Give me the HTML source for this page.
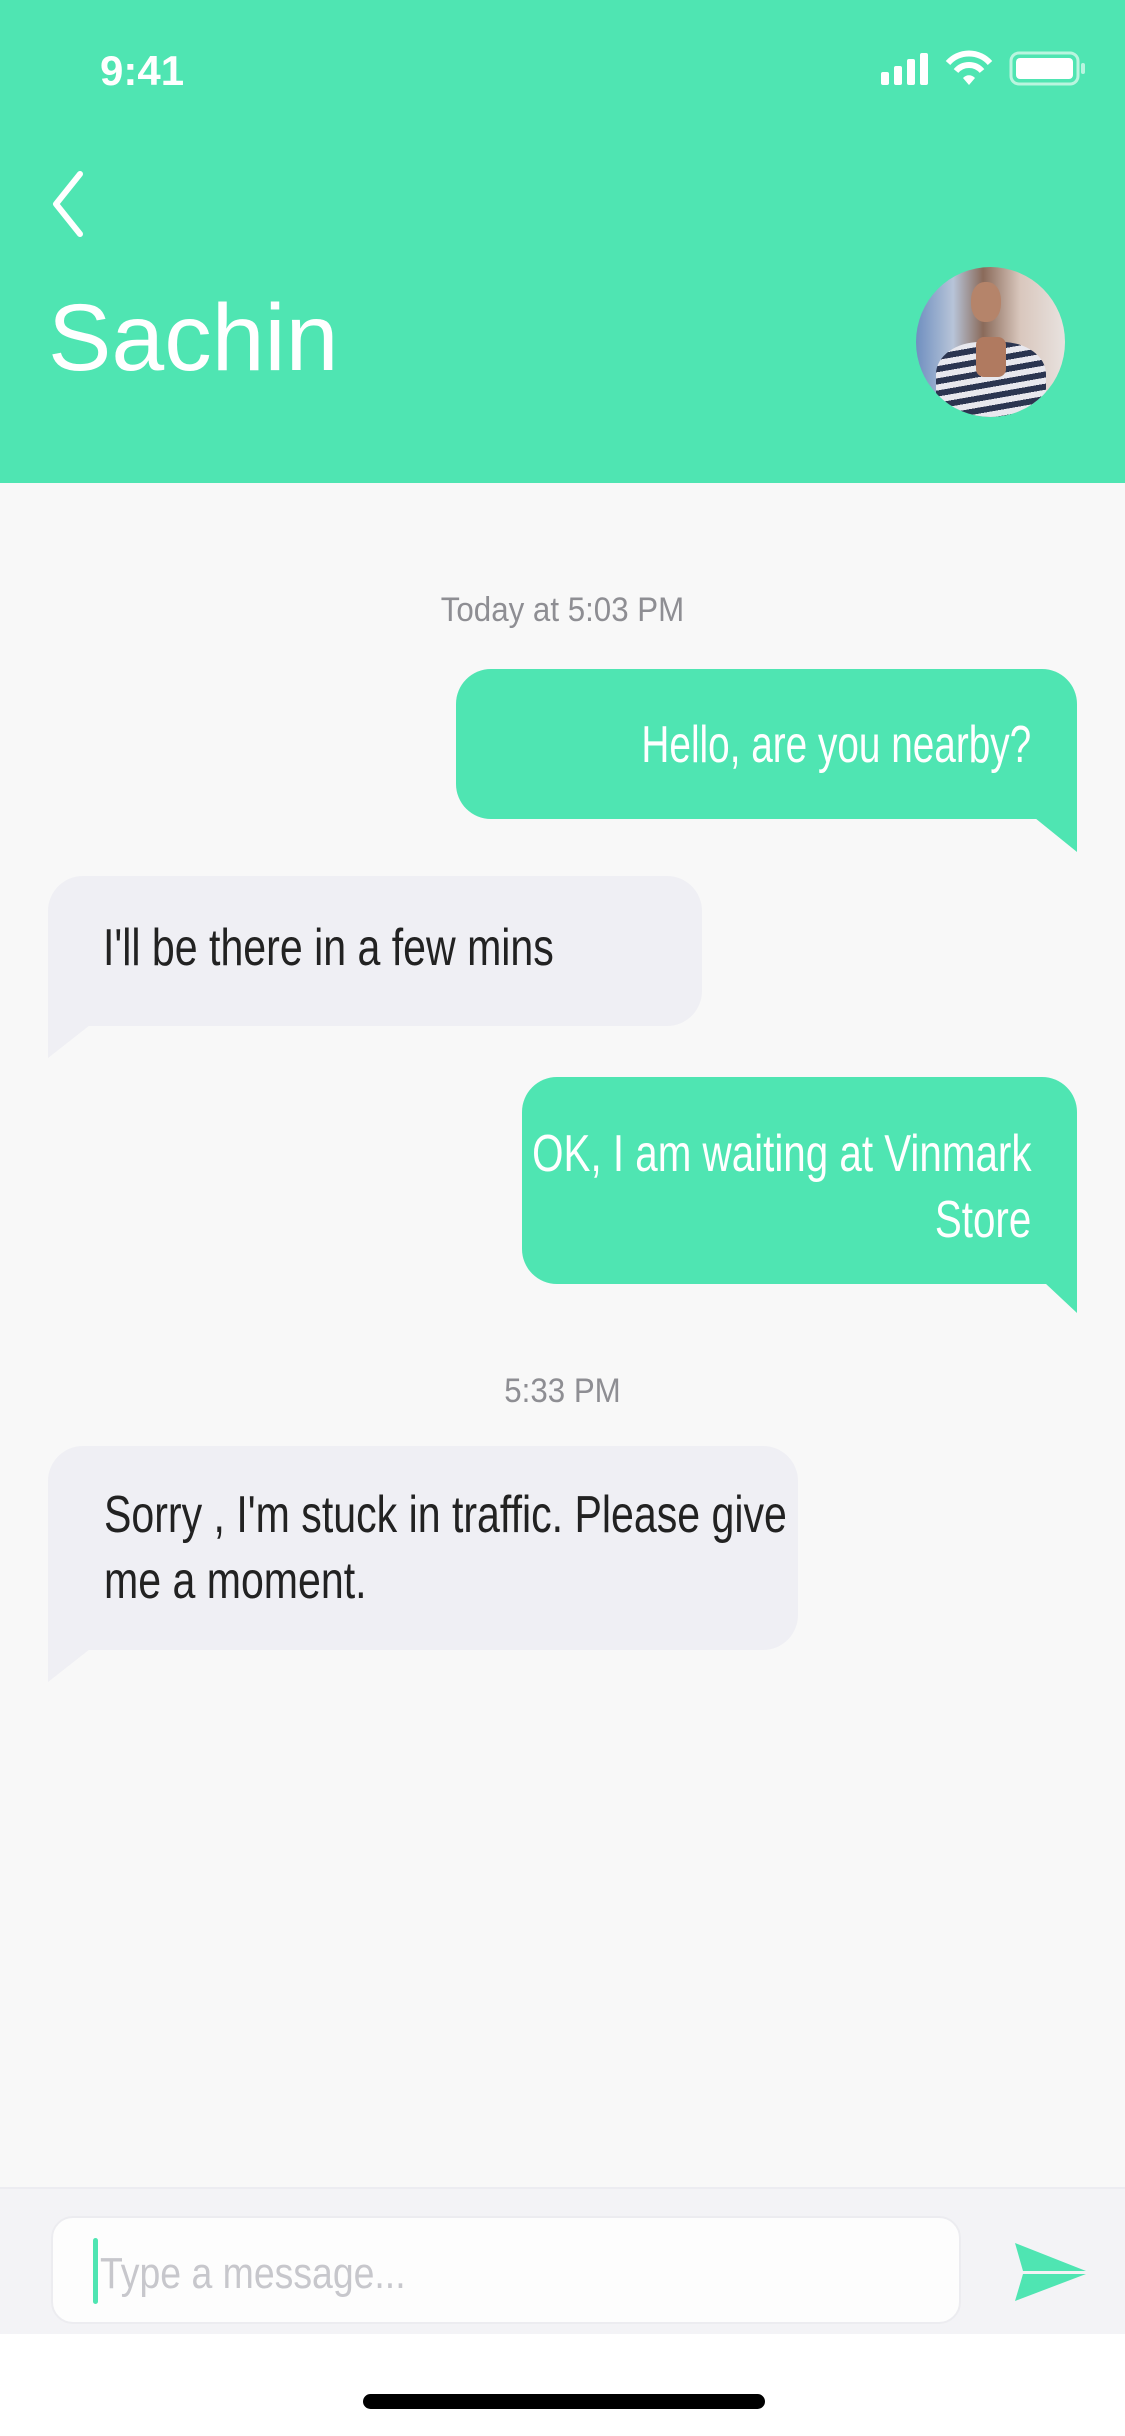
<!DOCTYPE html>
<html><head><meta charset="utf-8"><style>
*{margin:0;padding:0;box-sizing:border-box}
body{width:1125px;height:2436px;position:relative;background:#f8f8f8;overflow:hidden;font-family:"Liberation Sans",sans-serif}
.abs{position:absolute}
.t{position:absolute;white-space:nowrap;font-family:"Liberation Sans Narrow","Liberation Sans",sans-serif;font-size:52px;line-height:66px}
.l{transform-origin:left top}
.r{transform-origin:right top;text-align:right}
.ts{position:absolute;left:0;width:1125px;text-align:center;font-family:"Liberation Sans Narrow","Liberation Sans",sans-serif;font-size:34px;color:#8e8e93;line-height:40px;transform:scaleX(0.92)}
.g{background:#4fe5b2}
.gr{background:#efeff4}
</style></head><body>
<div class="abs g" style="left:0;top:0;width:1125px;height:483px"></div>
<div class="abs" style="left:100px;top:48px;font-size:42px;color:#fff;font-weight:bold;line-height:46px;font-family:'Liberation Sans Narrow','Liberation Sans',sans-serif">9:41</div>
<svg class="abs" style="left:878px;top:50px" width="210" height="40" viewBox="0 0 210 40">
<rect x="3" y="22" width="8" height="13" rx="2" fill="#fff"/><rect x="16" y="16" width="8" height="19" rx="2" fill="#fff"/><rect x="29" y="9" width="8" height="26" rx="2" fill="#fff"/><rect x="42" y="3" width="8" height="32" rx="2" fill="#fff"/>
<path d="M70 13 A28 28 0 0 1 112 13" stroke="#fff" stroke-width="6" fill="none"/><path d="M78 21 A17 17 0 0 1 104 21" stroke="#fff" stroke-width="6" fill="none"/><path d="M85 28 L91 35 L97 28 A8 8 0 0 0 85 28Z" fill="#fff"/>
<rect x="133" y="3" width="67" height="31" rx="8" stroke="#b9f5df" stroke-width="3" fill="none"/><rect x="138" y="8" width="57" height="21" rx="4" fill="#fff"/><rect x="203" y="13" width="4" height="11" rx="2" fill="#b9f5df"/>
</svg>
<svg class="abs" style="left:44px;top:168px" width="50" height="70"><path d="M36 6 L12 36 L36 66" stroke="#fff" stroke-width="6" fill="none" stroke-linecap="round" stroke-linejoin="round"/></svg>
<div class="abs" style="left:48px;top:283px;font-size:95px;color:#fff;line-height:110px">Sachin</div>
<div class="abs" style="left:916px;top:267px;width:149px;height:150px;border-radius:50%;overflow:hidden;background:linear-gradient(90deg,#6f8fc0 0%,#b7c4d8 25%,#8a6a5a 45%,#d9c7bd 70%,#e8e2df 100%)">
<div class="abs" style="left:55px;top:15px;width:30px;height:40px;border-radius:45%;background:#b5846a"></div>
<div class="abs" style="left:20px;top:75px;width:110px;height:80px;border-radius:40% 40% 0 0;background:repeating-linear-gradient(170deg,#2b3550 0 6px,#e8e8ee 6px 12px)"></div>
<div class="abs" style="left:60px;top:70px;width:30px;height:40px;background:#b07a60;border-radius:8px"></div>
</div>

<div class="ts" style="top:590px">Today at 5:03 PM</div>
<div class="abs g" style="left:456px;top:669px;width:621px;height:150px;border-radius:35px 35px 0 35px"></div>
<svg class="abs" style="left:1035px;top:818px" width="42" height="35"><path d="M0 0 L42 0 L42 34Z" fill="#4fe5b2"/></svg>
<div class="t r" style="right:94px;top:712px;color:#fff;transform:scaleX(0.745)">Hello, are you nearby?</div>

<div class="abs gr" style="left:48px;top:876px;width:654px;height:150px;border-radius:35px 35px 35px 0"></div>
<svg class="abs" style="left:48px;top:1025px" width="42" height="34"><path d="M0 0 L42 0 L0 33Z" fill="#efeff4"/></svg>
<div class="t l" style="left:103px;top:915px;color:#222;transform:scaleX(0.79)">I'll be there in a few mins</div>

<div class="abs g" style="left:522px;top:1077px;width:555px;height:207px;border-radius:35px 35px 0 35px"></div>
<svg class="abs" style="left:1045px;top:1283px" width="32" height="31"><path d="M0 0 L32 0 L32 30Z" fill="#4fe5b2"/></svg>
<div class="t r" style="right:94px;top:1121px;color:#fff;transform:scaleX(0.776)">OK, I am waiting at Vinmark</div>
<div class="t r" style="right:94px;top:1187px;color:#fff;transform:scaleX(0.776)">Store</div>

<div class="ts" style="top:1371px">5:33 PM</div>
<div class="abs gr" style="left:48px;top:1446px;width:750px;height:204px;border-radius:35px 35px 35px 0"></div>
<svg class="abs" style="left:48px;top:1649px" width="42" height="34"><path d="M0 0 L42 0 L0 33Z" fill="#efeff4"/></svg>
<div class="t l" style="left:104px;top:1482px;color:#222;transform:scaleX(0.79)">Sorry , I'm stuck in traffic. Please give</div>
<div class="t l" style="left:104px;top:1548px;color:#222;transform:scaleX(0.79)">me a moment.</div>

<div class="abs" style="left:0;top:2187px;width:1125px;height:147px;background:#f3f3f6;border-top:2px solid #ececf1"></div>
<div class="abs" style="left:51px;top:2216px;width:910px;height:108px;border-radius:22px;background:#fdfdfd;border:2px solid #ececf0"></div>
<div class="abs" style="left:93px;top:2238px;width:5px;height:66px;border-radius:3px;background:#4fe5b2"></div>
<div class="abs" style="left:100px;top:2249px;font-size:44px;line-height:50px;color:#c7c7cc;font-family:'Liberation Sans Narrow','Liberation Sans',sans-serif;transform:scaleX(0.85);transform-origin:left top;white-space:nowrap">Type a message...</div>
<svg class="abs" style="left:1012px;top:2240px" width="78" height="64" viewBox="0 0 78 64"><path d="M3 3 L74 31 L11 31 Z M11 34 L74 34 L3 61 Z" fill="#4fe5b2"/></svg>
<div class="abs" style="left:0;top:2334px;width:1125px;height:102px;background:#fff"></div>
<div class="abs" style="left:363px;top:2394px;width:402px;height:15px;border-radius:8px;background:#000"></div>
</body></html>
